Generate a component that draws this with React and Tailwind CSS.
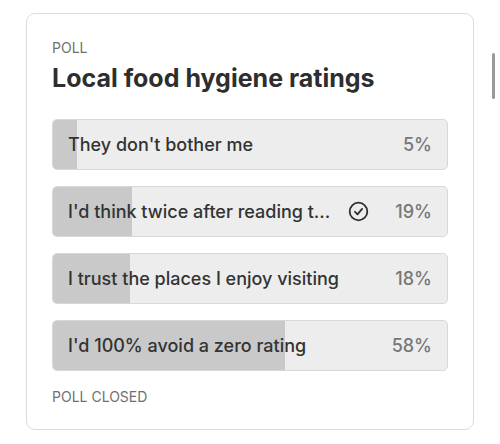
import React from 'react';

const options = [
  { label: "They don't bother me", pct: 5, fill: 'w-[24px]' },
  { label: "I'd think twice after reading t...", pct: 19, fill: 'w-[79px]', voted: true },
  { label: 'I trust the places I enjoy visiting', pct: 18, fill: 'w-[77px]' },
  { label: "I'd 100% avoid a zero rating", pct: 58, fill: 'w-[232px]' },
];

const CheckCircle = () => (
  <svg width="21" height="21" viewBox="0 0 21 21" fill="none" stroke="#2e2e2e" strokeWidth="1.8" strokeLinecap="round" strokeLinejoin="round">
    <circle cx="10.5" cy="10.5" r="8.8" />
    <path d="M7 10.8l2.5 2.5 4.6-5.4" />
  </svg>
);

const PollOption = ({ label, pct, fill, voted }) => (
  <div className="relative h-[51px] rounded-[5px] border border-[#d8d8d8] bg-[#ededed] overflow-hidden">
    <div className={`absolute left-0 top-0 bottom-0 bg-[#c9c9c9] ${fill}`} />
    <div className="relative flex h-full items-center pl-[15px] pr-[15px]">
      <span className="flex-1 text-[18px] font-medium text-[#333] whitespace-nowrap">{label}</span>
      {voted && (
        <span className="mr-[26px] flex items-center">
          <CheckCircle />
        </span>
      )}
      <span className="text-[18px] font-medium text-[#777]">{pct}%</span>
    </div>
  </div>
);

export default function App() {
  return (
    <div className="relative h-[444px] w-[500px] bg-white pt-[13px] pl-[26px] font-['Inter',sans-serif]">
      <div className="w-[448px] rounded-[9px] border border-[#dcdcdc] px-[25px] pt-[26px] pb-[24px]">
        <div className="text-[14px] leading-[16px] text-[#707070]">POLL</div>
        <h1 className="mt-[7px] text-[25px] leading-[30px] font-bold text-[#2e2e2e]">Local food hygiene ratings</h1>
        <div className="mt-[26px] flex flex-col gap-[16px]">
          {options.map((o) => (
            <PollOption key={o.label} {...o} />
          ))}
        </div>
        <div className="mt-[18px] text-[14px] leading-[16px] text-[#707070]">POLL CLOSED</div>
      </div>
      <div className="absolute right-[5px] top-[53px] h-[46px] w-[3px] rounded-full bg-[#9a9a9a]" />
    </div>
  );
}
